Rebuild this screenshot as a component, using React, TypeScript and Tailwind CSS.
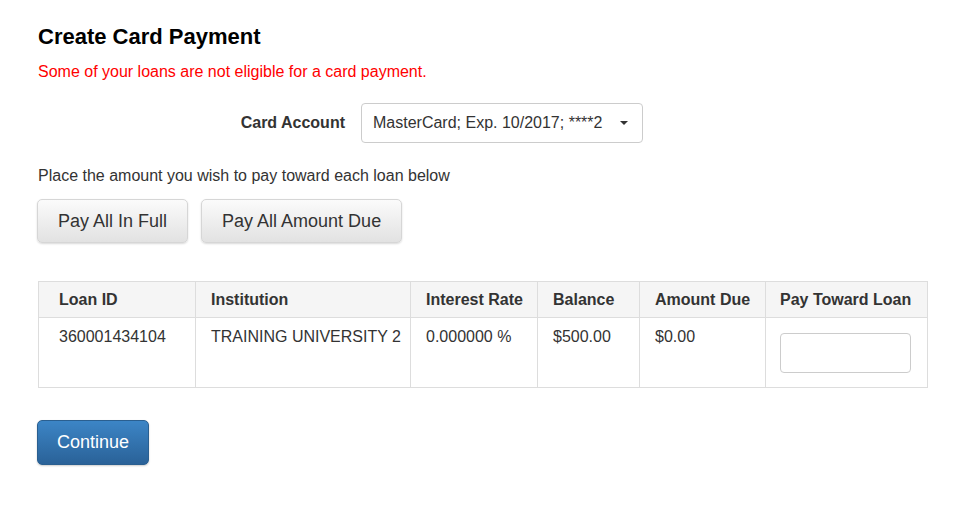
import React from "react";

const loans = [
  {
    id: "360001434104",
    institution: "TRAINING UNIVERSITY 2",
    rate: "0.000000 %",
    balance: "$500.00",
    due: "$0.00",
  },
];

const App = () => {
  return (
    <div className="min-h-screen bg-white px-[38px] pt-[25px] text-[16px] text-[#333] font-['Liberation_Sans',Arial,sans-serif]">
      <h1 className="text-[22px] font-bold leading-[24px] text-black">Create Card Payment</h1>
      <p className="mt-[13px] leading-[20px] text-[#ff0000]">
        Some of your loans are not eligible for a card payment.
      </p>

      <div className="mt-[21px] flex items-center">
        <label className="w-[307px] text-right font-bold">Card Account</label>
        <div className="ml-[16px] flex h-[40px] w-[282px] items-center justify-between rounded-[4px] border border-[#ccc] bg-white pl-[11px] pr-[14px]">
          <span>MasterCard; Exp. 10/2017; ****2</span>
          <span className="h-0 w-0 border-x-[4px] border-t-[4px] border-x-transparent border-t-[#333]" />
        </div>
      </div>

      <p className="mt-[23px] leading-[20px]">Place the amount you wish to pay toward each loan below</p>

      <div className="mt-[13px] flex gap-[13px] -ml-px">
        <button className="h-[44px] rounded-[5px] border border-[#d6d6d6] bg-gradient-to-b from-[#fbfbfb] to-[#e2e2e2] px-[20px] text-[18px] text-[#333] shadow-[0_1px_2px_rgba(0,0,0,0.15)]">
          Pay All In Full
        </button>
        <button className="h-[44px] rounded-[5px] border border-[#d6d6d6] bg-gradient-to-b from-[#fbfbfb] to-[#e2e2e2] px-[20px] text-[18px] text-[#333] shadow-[0_1px_2px_rgba(0,0,0,0.15)]">
          Pay All Amount Due
        </button>
      </div>

      <table className="mt-[38px] w-[889px] table-fixed border-collapse border border-[#ddd]">
        <colgroup>
          <col className="w-[157px]" />
          <col className="w-[215px]" />
          <col className="w-[127px]" />
          <col className="w-[102px]" />
          <col className="w-[126px]" />
          <col className="w-[162px]" />
        </colgroup>
        <thead>
          <tr className="h-[36px] bg-[#f5f5f5] text-left">
            <th className="border border-[#ddd] pl-[20px] font-bold">Loan ID</th>
            <th className="border border-[#ddd] pl-[15px] font-bold">Institution</th>
            <th className="border border-[#ddd] pl-[15px] font-bold">Interest Rate</th>
            <th className="border border-[#ddd] pl-[15px] font-bold">Balance</th>
            <th className="border border-[#ddd] pl-[15px] font-bold">Amount Due</th>
            <th className="border border-[#ddd] pl-[14px] font-bold">Pay Toward Loan</th>
          </tr>
        </thead>
        <tbody>
          {loans.map((loan) => (
            <tr key={loan.id} className="h-[70px] align-top">
              <td className="border border-[#ddd] pl-[20px] pt-[7px]">{loan.id}</td>
              <td className="border border-[#ddd] pl-[15px] pt-[7px]">{loan.institution}</td>
              <td className="border border-[#ddd] pl-[15px] pt-[7px]">{loan.rate}</td>
              <td className="border border-[#ddd] pl-[15px] pt-[7px]">{loan.balance}</td>
              <td className="border border-[#ddd] pl-[15px] pt-[7px]">{loan.due}</td>
              <td className="border border-[#ddd] pl-[14px] pt-[15px]">
                <input className="h-[40px] w-[131px] rounded-[4px] border border-[#ccc] px-2" />
              </td>
            </tr>
          ))}
        </tbody>
      </table>

      <button className="mt-[32px] -ml-px h-[45px] rounded-[5px] border border-[#2a5f90] bg-gradient-to-b from-[#3c85c6] to-[#2a6298] px-[19px] text-[18px] text-white shadow-[0_1px_2px_rgba(0,0,0,0.2)]">
        Continue
      </button>
    </div>
  );
};

export default App;
